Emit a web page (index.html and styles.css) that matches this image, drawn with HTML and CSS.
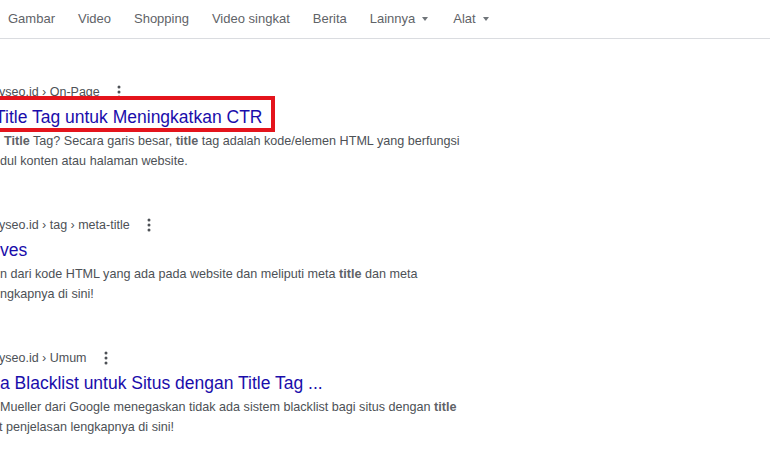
FILE: index.html
```html
<!DOCTYPE html>
<html lang="id">
<head>
<meta charset="utf-8">
<title>Title Tag - Penelusuran</title>
<link rel="stylesheet" href="styles.css">
</head>
<body>
<nav class="tabs">
  <span class="tab">Gambar</span>
  <span class="tab">Video</span>
  <span class="tab">Shopping</span>
  <span class="tab">Video singkat</span>
  <span class="tab">Berita</span>
  <span class="tab">Lainnya <span class="caret"></span></span>
  <span class="tab tab-tools">Alat <span class="caret"></span></span>
</nav>
<main class="results">
  <div class="result result-boxed">
    <div class="crumb"><span class="cut-y">yseo.id</span> › On-Page <svg class="more" viewBox="0 0 4 14" width="4" height="14"><circle cx="2" cy="2" r="1.5"/><circle cx="2" cy="7" r="1.5"/><circle cx="2" cy="12" r="1.5"/></svg></div>
    <h3 class="title cut-t">Title Tag untuk Meningkatkan CTR</h3>
    <div class="box"></div>
    <p class="snippet"><span class="lead-1"><b>Title</b> Tag? Secara garis besar, <b>title</b> tag adalah kode/elemen HTML yang berfungsi</span><br><span class="cut-d">dul konten atau halaman website.</span></p>
  </div>
  <div class="result">
    <div class="crumb"><span class="cut-y">yseo.id</span> › tag › meta-title <svg class="more" viewBox="0 0 4 14" width="4" height="14"><circle cx="2" cy="2" r="1.5"/><circle cx="2" cy="7" r="1.5"/><circle cx="2" cy="12" r="1.5"/></svg></div>
    <h3 class="title">ves</h3>
    <p class="snippet">n dari kode HTML yang ada pada website dan meliputi meta <b>title</b> dan meta<br>ngkapnya di sini!</p>
  </div>
  <div class="result">
    <div class="crumb"><span class="cut-y">yseo.id</span> › Umum <svg class="more" viewBox="0 0 4 14" width="4" height="14"><circle cx="2" cy="2" r="1.5"/><circle cx="2" cy="7" r="1.5"/><circle cx="2" cy="12" r="1.5"/></svg></div>
    <h3 class="title">a Blacklist untuk Situs dengan Title Tag ...</h3>
    <p class="snippet">Mueller dari Google menegaskan tidak ada sistem blacklist bagi situs dengan <b>title</b><br><span class="cut-t2">t penjelasan lengkapnya di sini!</span></p>
  </div>
</main>
</body>
</html>
```

FILE: styles.css
```css
html, body {
  margin: 0;
  padding: 0;
  background: #ffffff;
  overflow: hidden;
}
body {
  width: 770px;
  height: 459px;
  font-family: "Liberation Sans", Arial, sans-serif;
}
.tabs {
  display: flex;
  align-items: center;
  gap: 23px;
  height: 39px;
  padding-left: 8px;
  border-bottom: 1px solid #dadce0;
  font-size: 13px;
  color: #5f6368;
  box-sizing: border-box;
  white-space: nowrap;
}
.tab {
  display: inline-flex;
  align-items: center;
  line-height: 38px;
}
.tab-tools {
  margin-left: 2px;
}
.caret {
  display: inline-block;
  width: 0;
  height: 0;
  margin-left: 7px;
  border-left: 3.5px solid transparent;
  border-right: 3.5px solid transparent;
  border-top: 4px solid #70757a;
}
.results {
  padding-top: 43px;
  display: flex;
  flex-direction: column;
  gap: 44px;
}
.result {
  position: relative;
}
.crumb {
  display: flex;
  align-items: center;
  height: 20px;
  font-size: 12.5px;
  color: #4d5156;
  white-space: pre;
}
.more {
  fill: #4d5156;
  margin-left: 14px;
}
.cut-y {
  margin-left: -1px;
}
.title {
  margin: 2px 0 1px;
  font-weight: normal;
  font-size: 17.5px;
  line-height: 26px;
  color: #1a0dab;
  white-space: nowrap;
}
.cut-t {
  margin-left: -5px;
}
.snippet {
  margin: 0;
  font-size: 12.6px;
  line-height: 20px;
  color: #4d5156;
  white-space: nowrap;
}
.snippet b {
  font-weight: bold;
  color: #5f6368;
}
.lead-1 {
  margin-left: 4px;
}
.cut-d {
  margin-left: 0;
}
.cut-t2 {
  display: inline-block;
  margin-left: -1px;
}
.box {
  position: absolute;
  left: -20px;
  top: 14px;
  width: 295px;
  height: 36px;
  border: 4px solid #e4141c;
  box-sizing: border-box;
  pointer-events: none;
}
```
